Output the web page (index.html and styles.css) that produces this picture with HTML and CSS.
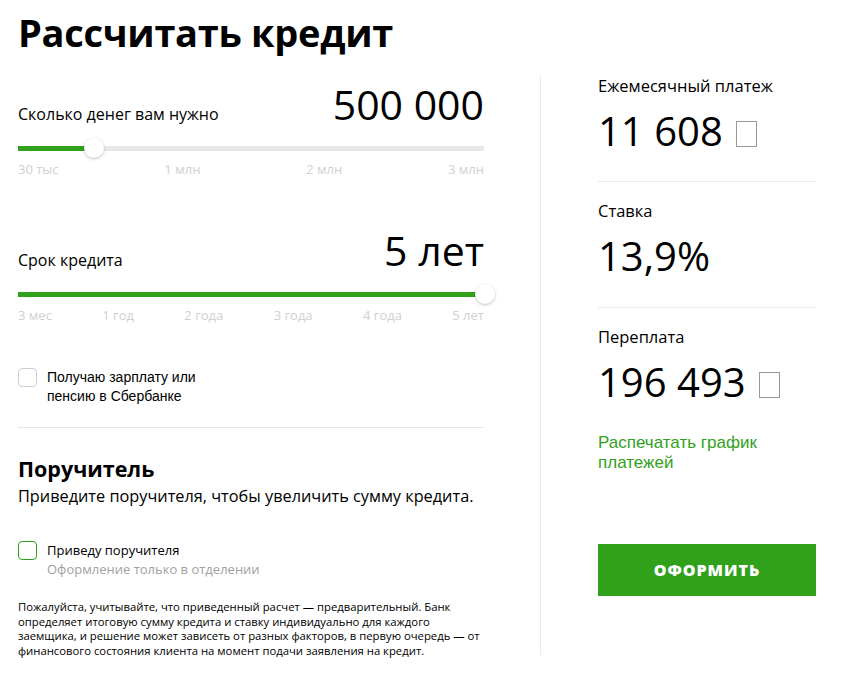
FILE: index.html
```html
<!DOCTYPE html>
<html lang="ru">
<head>
    <meta charset="UTF-8">
    <meta name="viewport" content="width=device-width, initial-scale=1.0">
    <title>Рассчитать кредит</title>
    <link rel="stylesheet" href="styles.css">
</head>
<body>
    <h1 class="title">Рассчитать кредит</h1>

    <div class="calc">
        <div class="params">
            <!-- sum -->
            <div class="param">
                <div class="param-head">
                    <span class="param-label">Сколько денег вам нужно</span>
                    <span class="param-value">500 000</span>
                </div>
                <div class="slider">
                    <div class="fill" style="width: 76px"></div>
                    <div class="thumb"></div>
                </div>
                <div class="ticks">
                    <span>30 тыс</span>
                    <span>1 млн</span>
                    <span>2 млн</span>
                    <span>3 млн</span>
                </div>
            </div>

            <!-- term -->
            <div class="param param-term">
                <div class="param-head">
                    <span class="param-label">Срок кредита</span>
                    <span class="param-value">5 лет</span>
                </div>
                <div class="slider">
                    <div class="fill" style="width: 100%"></div>
                    <div class="thumb"></div>
                </div>
                <div class="ticks">
                    <span>3 мес</span>
                    <span>1 год</span>
                    <span>2 года</span>
                    <span>3 года</span>
                    <span>4 года</span>
                    <span>5 лет</span>
                </div>
            </div>

            <label class="check">
                <span class="box"></span>
                <span class="check-text">Получаю зарплату или<br>пенсию в Сбербанке</span>
            </label>

            <div class="sep"></div>

            <h2 class="guarantor">Поручитель</h2>
            <p class="guarantor-text">Приведите поручителя, чтобы увеличить сумму кредита.</p>

            <label class="check check-green">
                <span class="box"></span>
                <span>
                    <span class="check-small">Приведу поручителя</span>
                    <span class="check-note">Оформление только в отделении</span>
                </span>
            </label>

            <p class="note">Пожалуйста, учитывайте, что приведенный расчет — предварительный. Банк определяет итоговую сумму кредита и ставку индивидуально для каждого заемщика, и решение может зависеть от разных факторов, в первую очередь — от финансового состояния клиента на момент подачи заявления на кредит.</p>
        </div>

        <div class="result">
            <div class="res-item">
                <div class="res-label">Ежемесячный платеж</div>
                <div class="res-value">11 608 <span class="rub"></span></div>
            </div>
            <div class="res-item">
                <div class="res-label">Ставка</div>
                <div class="res-value">13,9%</div>
            </div>
            <div class="res-item res-last">
                <div class="res-label">Переплата</div>
                <div class="res-value">196 493 <span class="rub"></span></div>
            </div>
            <a class="print" href="#">Распечатать график платежей</a>
            <button class="apply" type="button">Оформить</button>
        </div>
    </div>
</body>
</html>
```

FILE: styles.css
```css
body {
    margin: 0;
    padding: 0 18px;
    font-family: "Open Sans", "Noto Sans", sans-serif;
    color: #000;
    background: #fff;
}
.title {
    margin: 0;
    padding-top: 6px;
    height: 70px;
    font-size: 38px;
    font-weight: 700;
    letter-spacing: -0.3px;
}

.calc {
    display: flex;
    align-items: flex-start;
}
.params {
    width: 466px;
}
.result {
    width: 218px;
    height: 579px;
    margin-left: 56px;
    padding-left: 57px;
    border-left: 1px solid #eaeaea;
}

/* sliders */
.param-head {
    display: flex;
    justify-content: space-between;
    align-items: baseline;
    padding-top: 4px;
}
.param-label {
    font-size: 16px;
}
.param-value {
    font-size: 41px;
    line-height: 48px;
}
.param-term {
    margin-top: 44px;
}
.slider {
    position: relative;
    height: 5px;
    margin-top: 18px;
    background: #e8e8e8;
}
.fill {
    height: 100%;
    background: #31a11c;
}
.thumb {
    position: absolute;
    top: -8px;
    left: 66px;
    width: 20px;
    height: 20px;
    border-radius: 50%;
    background: #fff;
    box-shadow: 0 1px 3px rgba(0, 0, 0, 0.25);
}
.param-term .thumb {
    left: auto;
    right: -11px;
}
.ticks {
    display: flex;
    justify-content: space-between;
    margin-top: 9px;
    font-size: 13px;
    color: #d0d0d0;
}

/* checkboxes */
.check {
    display: flex;
    align-items: flex-start;
    margin-top: 44px;
    cursor: pointer;
}
.box {
    flex: none;
    width: 17px;
    height: 17px;
    border: 1px solid #cfcfcf;
    border-radius: 4px;
    margin-right: 10px;
}
.check-text {
    font-family: "Liberation Sans", Arial, sans-serif;
    font-size: 14px;
    line-height: 19px;
}
.check-green {
    margin-top: 34px;
}
.check-green .box {
    border-color: #31a11c;
}
.check-small {
    display: block;
    font-size: 13px;
    line-height: 18px;
}
.check-note {
    display: block;
    font-size: 13px;
    line-height: 20px;
    color: #a0a0a0;
}

.sep {
    height: 1px;
    margin-top: 21px;
    background: #e6e6e6;
}

.guarantor {
    margin: 26px 0 0;
    font-size: 21.5px;
    font-weight: 700;
}
.guarantor-text {
    margin: 2px 0 0;
    font-size: 16.3px;
}
.note {
    margin: 21px 0 0;
    font-size: 11.3px;
    line-height: 14.7px;
}

/* results */
.res-item {
    height: 105px;
    border-bottom: 1px solid #eaeaea;
}
.res-item + .res-item {
    height: 126px;
    padding-top: 19px;
    box-sizing: border-box;
}
.res-item.res-last {
    height: auto;
    border-bottom: none;
}
.res-label {
    font-size: 16.5px;
    line-height: 20px;
}
.res-value {
    margin-top: 10px;
    font-size: 40px;
    line-height: 50px;
}
.rub {
    display: inline-block;
    width: 19px;
    height: 24px;
    margin-left: 3px;
    border: 1px solid #999;
    vertical-align: -1px;
}
.print {
    display: block;
    margin-top: 26px;
    font-family: "Liberation Sans", Arial, sans-serif;
    font-size: 17px;
    line-height: 20px;
    color: #31a11c;
    text-decoration: none;
}
.apply {
    display: block;
    width: 100%;
    height: 52px;
    margin-top: 71px;
    border: none;
    background: #31a11c;
    color: #fff;
    font-family: "Open Sans", sans-serif;
    font-size: 16px;
    font-weight: 800;
    letter-spacing: 1px;
    text-transform: uppercase;
}
```
